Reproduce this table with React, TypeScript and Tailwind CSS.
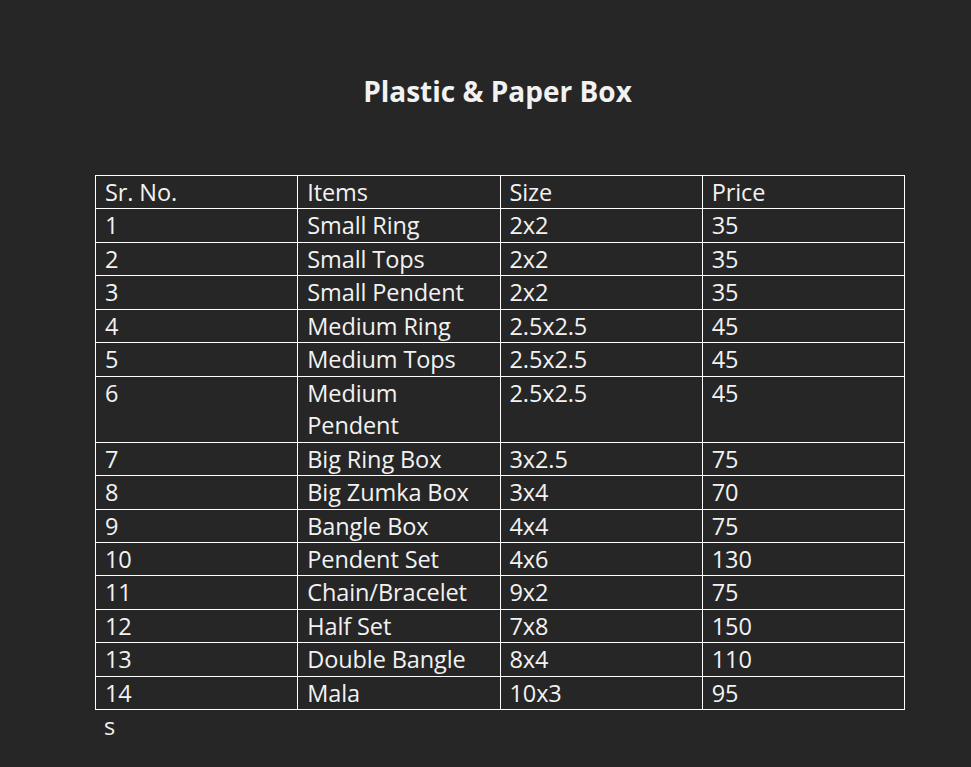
const rows: [string, string, string, string][] = [
  ["1", "Small Ring", "2x2", "35"],
  ["2", "Small Tops", "2x2", "35"],
  ["3", "Small Pendent", "2x2", "35"],
  ["4", "Medium Ring", "2.5x2.5", "45"],
  ["5", "Medium Tops", "2.5x2.5", "45"],
  ["6", "Medium Pendent", "2.5x2.5", "45"],
  ["7", "Big Ring Box", "3x2.5", "75"],
  ["8", "Big Zumka Box", "3x4", "70"],
  ["9", "Bangle Box", "4x4", "75"],
  ["10", "Pendent Set", "4x6", "130"],
  ["11", "Chain/Bracelet", "9x2", "75"],
  ["12", "Half Set", "7x8", "150"],
  ["13", "Double Bangle", "8x4", "110"],
  ["14", "Mala", "10x3", "95"],
];

const cell = "border border-white pl-[9px] pr-[4px] py-0 align-top text-left font-normal leading-[32.45px]";

export default function App() {
  return (
    <div className="min-h-screen w-full bg-[#262626] text-[#f2f2f2] font-['Open_Sans','Liberation_Sans',sans-serif]">
      {/* Title */}
      <h1 className="pt-[74px] text-center text-[28px] font-bold leading-[34px] pl-[24px]">
        Plastic &amp; Paper Box
      </h1>

      {/* Price table */}
      <div className="ml-[95px] mt-[67px] w-[810px]">
        <table className="w-full table-fixed border-collapse text-[23.5px] tracking-[-0.1px]">
          <thead>
            <tr>
              <th className={cell}>Sr. No.</th>
              <th className={cell}>Items</th>
              <th className={cell}>Size</th>
              <th className={cell}>Price</th>
            </tr>
          </thead>
          <tbody>
            {rows.map((r) => (
              <tr key={r[0]}>
                <td className={cell}>{r[0]}</td>
                <td className={cell + (r[1] === "Medium Pendent" ? " pr-[40px]" : "")}>{r[1]}</td>
                <td className={cell}>{r[2]}</td>
                <td className={cell}>{r[3]}</td>
              </tr>
            ))}
          </tbody>
        </table>
        <p className="pl-[9px] text-[23.5px] leading-[33px]">s</p>
      </div>
    </div>
  );
}
